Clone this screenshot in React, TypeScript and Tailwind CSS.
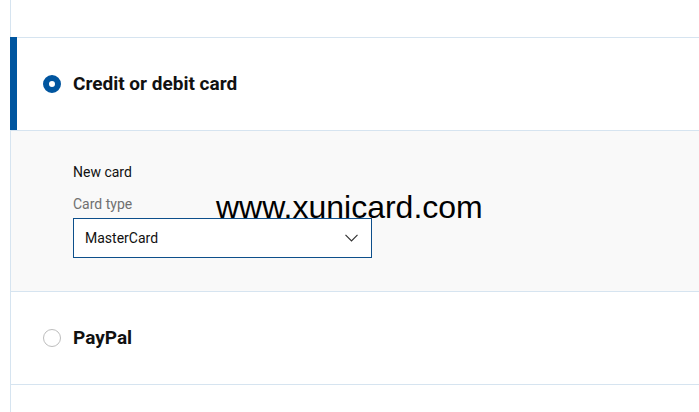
import React from "react";

function Radio({ checked }: { checked?: boolean }) {
  return checked ? (
    <span className="block w-[18px] h-[18px] rounded-full border-[6px] border-[#00559f] bg-white shrink-0" />
  ) : (
    <span className="block w-[18px] h-[18px] rounded-full border border-[#bdbdbd] bg-white shrink-0" />
  );
}

export default function App() {
  return (
    <div className="relative w-full h-[412px] overflow-hidden bg-white font-['Roboto',sans-serif] text-[#111]">
      <div className="ml-[10px] h-full border-l border-[#d6e4f0] flex flex-col">
        <div className="mt-[-55px] h-[93px] shrink-0 border-b border-[#d6e4f0] flex items-center pl-[32px] gap-[12px]">
          <Radio />
        </div>
        <div className="relative h-[93px] shrink-0 border-b border-[#d6e4f0] flex items-center pl-[32px] gap-[12px]">
          <div className="absolute left-[-1px] top-[-1px] bottom-0 w-[7px] bg-[#00559f]" />
          <Radio checked />
          <span className="text-[19px] font-bold">Credit or debit card</span>
        </div>
        <div className="h-[161px] shrink-0 border-b border-[#d6e4f0] bg-[#f9f9f9] pl-[62px] pt-[33px]">
          <div className="text-[14px] leading-[16px] text-[#111]">New card</div>
          <div className="mt-[16px] text-[14px] leading-[16px] text-[#707070]">Card type</div>
          <div className="mt-[6px] w-[299px] h-[40px] border border-[#0d4f8b] bg-white flex items-center justify-between pl-[11px] pr-[13px]">
            <span className="text-[14px] text-[#111]">MasterCard</span>
            <svg width="13" height="8" viewBox="0 0 13 8" fill="none">
              <path d="M0.5 0.8 L6.5 6.8 L12.5 0.8" stroke="#333" strokeWidth="1.2" />
            </svg>
          </div>
        </div>
        <div className="h-[93px] shrink-0 border-b border-[#d6e4f0] flex items-center pl-[32px] gap-[12px]">
          <Radio />
          <span className="text-[19px] font-bold">PayPal</span>
        </div>
      </div>
      <div className="absolute left-[216px] top-[189px] font-['Liberation_Sans',Arial,sans-serif] text-[32px] leading-[36px] text-black whitespace-nowrap">
        www.xunicard.com
      </div>
    </div>
  );
}
